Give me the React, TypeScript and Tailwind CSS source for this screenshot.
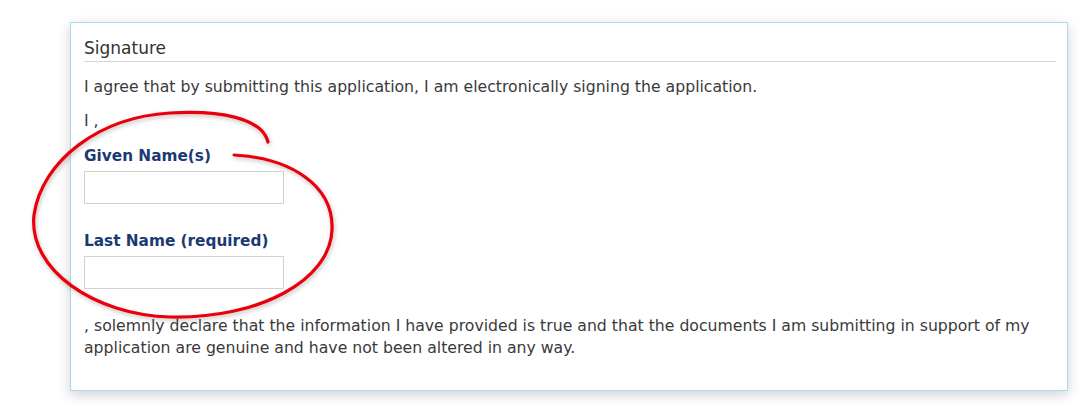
export default function App() {
  return (
    <div
      className="relative w-[1080px] h-[406px] bg-white overflow-hidden"
      style={{ fontFamily: '"DejaVu Sans", Verdana, sans-serif' }}
    >
      <div className="pt-[22px] pl-[70px]">
        <div className="w-[998px] h-[369px] border border-[#a9d9ef] bg-white shadow-[0_4px_12px_rgba(0,0,0,0.18)] pl-[13px] pr-[11px]">
          {/* Heading */}
          <div className="pt-[15px] pb-[3px] border-b border-[#d4d4d4] text-[17px] leading-[20px] text-[#333]">
            Signature
          </div>

          <p className="mt-[16px] text-[15.7px] leading-[18px] text-[#3a3a3a]">
            I agree that by submitting this application, I am electronically signing the application.
          </p>

          <p className="mt-[16px] text-[15.7px] leading-[18px] text-[#3a3a3a]">I ,</p>

          <label className="block mt-[17px] text-[15.3px] leading-[18px] font-bold text-[#1b3a72]">
            Given Name(s)
          </label>
          <div className="mt-[6px] w-[200px] h-[33px] border border-[#d2d2d2] bg-white" />

          <label className="block mt-[28px] text-[15.3px] leading-[18px] font-bold text-[#1b3a72]">
            Last Name (required)
          </label>
          <div className="mt-[6px] w-[200px] h-[33px] border border-[#d2d2d2] bg-white" />

          <p className="mt-[26px] text-[15.7px] leading-[22px] text-[#3a3a3a]">
            , solemnly declare that the information I have provided is true and that the documents I am submitting in support of my application are genuine and have not been altered in any way.
          </p>
        </div>
      </div>

      {/* hand-drawn red circle */}
      <svg
        className="absolute top-0 left-0 pointer-events-none"
        width="1080"
        height="406"
        viewBox="0 0 1080 406"
      >
        <defs>
          <filter id="sh" x="-20%" y="-20%" width="140%" height="140%">
            <feDropShadow dx="1" dy="2" stdDeviation="2" floodColor="#000" floodOpacity="0.25" />
          </filter>
        </defs>
        <path
          d="M 268 142 C 262 118, 220 110, 170 113 C 100 117, 42 160, 34 215 C 28 270, 95 315, 170 317 C 260 319, 330 280, 332 230 C 334 185, 290 158, 234 155"
          fill="none"
          stroke="#e8000b"
          strokeWidth="3.2"
          strokeLinecap="round"
          filter="url(#sh)"
        />
      </svg>
    </div>
  )
}
